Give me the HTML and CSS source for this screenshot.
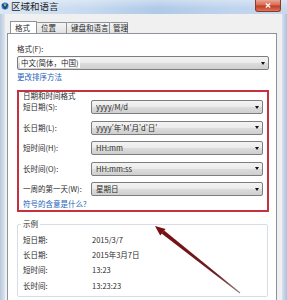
FILE: index.html
```html
<!DOCTYPE html>
<html lang="zh-CN">
<head>
<meta charset="utf-8">
<title>区域和语言</title>
<link rel="stylesheet" href="styles.css">
</head>
<body>
<div class="window">
  <div class="titlebar">
    <svg class="appicon" width="8" height="8" viewBox="0 0 8 8">
      <circle cx="4" cy="4" r="3.5" fill="#3d7fc4"/>
      <path d="M1.2 2.2 L4 6.5 L6.8 2.2" fill="none" stroke="#1d3f6a" stroke-width="1.3"/>
      <circle cx="4" cy="3" r="1" fill="#8fd16a"/>
    </svg>
    <span class="title">区域和语言</span>
    <div class="close">
      <svg width="6" height="5" viewBox="0 0 6 5"><path d="M0.8 0.5 L5.2 4.5 M5.2 0.5 L0.8 4.5" stroke="#fff" stroke-width="1.3"/></svg>
    </div>
  </div>
  <div class="body-row">
    <div class="frame-left"></div>
    <div class="client">
      <div class="tabs">
        <div class="tab tab-1 active">格式</div>
        <div class="tab tab-2">位置</div>
        <div class="tab tab-3">键盘和语言</div>
        <div class="tab tab-4">管理</div>
      </div>
      <div class="panel">
        <div class="label">格式(F):</div>
        <div class="combo combo-wide"><span class="combo-text">中文(简体，中国)</span><span class="caret"></span></div>
        <div class="link">更改排序方法</div>

        <div class="redbox">
          <div class="group-title">日期和时间格式</div>
          <div class="rows">
            <div class="row"><span class="row-label">短日期(S):</span><div class="combo"><span class="combo-text">yyyy/M/d</span><span class="caret"></span></div></div>
            <div class="row"><span class="row-label">长日期(L):</span><div class="combo"><span class="combo-text">yyyy'年'M'月'd'日'</span><span class="caret"></span></div></div>
            <div class="row"><span class="row-label">短时间(H):</span><div class="combo"><span class="combo-text">HH:mm</span><span class="caret"></span></div></div>
            <div class="row"><span class="row-label">长时间(O):</span><div class="combo"><span class="combo-text">HH:mm:ss</span><span class="caret"></span></div></div>
            <div class="row"><span class="row-label">一周的第一天(W):</span><div class="combo"><span class="combo-text">星期日</span><span class="caret"></span></div></div>
          </div>
          <div class="link link-in">符号的含意是什么?</div>
        </div>

        <div class="examples">
          <div class="ex-title">示例</div>
          <div class="ex-row"><span class="ex-label">短日期:</span><span>2015/3/7</span></div>
          <div class="ex-row"><span class="ex-label">长日期:</span><span>2015年3月7日</span></div>
          <div class="ex-row"><span class="ex-label">短时间:</span><span>13:23</span></div>
          <div class="ex-row"><span class="ex-label">长时间:</span><span>13:23:23</span></div>
        </div>
      </div>
    </div>
    <div class="frame-right"></div>
  </div>
  <svg class="annot-arrow" width="287" height="300" viewBox="0 0 287 300">
    <defs>
      <linearGradient id="ag" x1="155" y1="226" x2="240" y2="293" gradientUnits="userSpaceOnUse">
        <stop offset="0" stop-color="#7c0f12"/>
        <stop offset="0.7" stop-color="#6a1a1c"/>
        <stop offset="1" stop-color="#8a7f80"/>
      </linearGradient>
    </defs>
    <polygon points="155,226 165.6,228.9 160.2,235.6" fill="#7c0f12"/>
    <polygon points="161.6,233.6 164.2,230.4 240.3,292.6 239.7,293.4" fill="url(#ag)"/>
  </svg>
</div>
</body>
</html>
```

FILE: styles.css
```css
* { box-sizing: border-box; }

html, body {
  margin: 0;
  padding: 0;
}

body {
  width: 287px;
  height: 300px;
  overflow: hidden;
  font-family: "Noto Sans CJK SC", "Noto Sans", sans-serif;
  color: #2a2a2a;
  background: #c9d9ec;
}

.window {
  position: relative;
  width: 287px;
  height: 300px;
  display: flex;
  flex-direction: column;
}

/* title bar */
.titlebar {
  height: 14px;
  flex: none;
  display: flex;
  align-items: flex-start;
  background:
    linear-gradient(to bottom, rgba(255,255,255,0.35), rgba(255,255,255,0) 60%),
    linear-gradient(to right, #dbe7f4 0%, #c7daef 30%, #afc9e8 55%, #bcd2ec 75%, #c6d9ef 100%);
}

.appicon {
  margin: 2px 0 0 1px;
  flex: none;
}

.title {
  margin-left: 2px;
  font-size: 9.5px;
  line-height: 13px;
  color: #1c1c1c;
}

.close {
  margin-left: auto;
  margin-right: 6px;
  width: 26px;
  height: 12px;
  display: flex;
  align-items: center;
  justify-content: center;
  border: 1px solid #8a3a2e;
  border-top: none;
  border-radius: 0 0 3px 3px;
  background: linear-gradient(to bottom, #e9a595 0%, #d86a52 45%, #c23c22 55%, #d9765c 100%);
}

/* body */
.body-row {
  flex: 1;
  display: flex;
  min-height: 0;
}

.frame-left {
  width: 5px;
  flex: none;
  background: linear-gradient(to right, #b8c9dc, #dbe5ef);
}

.frame-right {
  width: 5px;
  flex: none;
  background: linear-gradient(to right, #d7e2ee, #a8c2e0);
}

.client {
  flex: 1;
  background: #f0f0f0;
  padding: 8px 5px 0 2px;
  display: flex;
  flex-direction: column;
  min-width: 0;
}

/* tabs */
.tabs {
  display: flex;
  margin-left: 3px;
  height: 11px;
  flex: none;
  position: relative;
  z-index: 1;
}

.tab {
  height: 11px;
  font-size: 7.5px;
  line-height: 10px;
  padding-left: 4px;
  border: 1px solid #8d939c;
  border-bottom: none;
  border-left: none;
  background: linear-gradient(to bottom, #f4f4f4, #e2e2e2);
  border-radius: 1px 1px 0 0;
  white-space: nowrap;
}

.tab-1 { width: 27px; border-left: 1px solid #8d939c; }
.tab-2 { width: 30px; }
.tab-3 { width: 43px; }
.tab-4 { width: 18px; padding-left: 3px; }

.tab.active {
  background: #ffffff;
  height: 12px;
  margin-top: -1px;
  line-height: 11px;
}

.panel {
  flex: 1;
  background: #ffffff;
  border: 1px solid #8d939c;
  border-bottom: none;
  padding-left: 9px;
  display: flex;
  flex-direction: column;
}

.label {
  margin-top: 10px;
  font-size: 7.5px;
  line-height: 10px;
}

/* combo boxes */
.combo {
  height: 14px;
  border: 1px solid #7d7d7d;
  border-radius: 2px;
  background: linear-gradient(to bottom, #f3f3f3 0%, #ebebeb 48%, #dcdcdc 52%, #cfcfcf 100%);
  display: flex;
  align-items: center;
  padding-left: 4px;
  width: 172px;
  flex: none;
}

.combo-wide {
  width: 252px;
  margin-top: 2px;
  padding-left: 2px;
}

.combo-text {
  flex: 1;
  font-size: 7.5px;
  line-height: 12px;
  white-space: nowrap;
  overflow: hidden;
}

.combo-wide .combo-text {
  background: #fff;
  flex: none;
  padding: 0 1px;
  line-height: 10px;
}

.combo-wide .combo-text + .caret { margin-left: auto; }

.caret {
  width: 0;
  height: 0;
  border-left: 2.5px solid transparent;
  border-right: 2.5px solid transparent;
  border-top: 3px solid #111;
  margin-right: 3px;
  flex: none;
}

.link {
  font-size: 7.5px;
  line-height: 10px;
  color: #1a62b7;
  margin-top: 2px;
}

/* red highlighted group */
.redbox {
  margin-top: 8px;
  width: 252px;
  height: 122px;
  border: 2px solid #c4323f;
  padding: 0 4px;
  display: flex;
  flex-direction: column;
}

.group-title {
  margin-top: -1px;
  font-size: 7.5px;
  line-height: 9px;
}

.rows {
  margin-top: 0;
  display: flex;
  flex-direction: column;
  gap: 6.5px;
}

.row {
  display: flex;
  align-items: center;
}

.row-label {
  width: 68px;
  flex: none;
  font-size: 7.5px;
  line-height: 10px;
  white-space: nowrap;
}

.link-in {
  margin-top: 3px;
}

/* examples */
.examples {
  margin-top: 12px;
  width: 251px;
  height: 73px;
  border: 1px solid #d6dde3;
  border-radius: 2px;
  padding-left: 5px;
  display: flex;
  flex-direction: column;
}

.ex-title {
  margin-top: -6px;
  margin-bottom: 3px;
  margin-left: -2px;
  padding: 0 2px;
  background: #fff;
  align-self: flex-start;
  font-size: 7.5px;
  line-height: 10px;
}

.ex-row {
  display: flex;
  height: 15.3px;
  align-items: center;
  font-size: 7.5px;
  line-height: 10px;
}

.ex-label {
  width: 69px;
  flex: none;
}

/* annotation arrow drawn over the dialog */
.annot-arrow {
  position: absolute;
  left: 0;
  top: 0;
  pointer-events: none;
}
```
